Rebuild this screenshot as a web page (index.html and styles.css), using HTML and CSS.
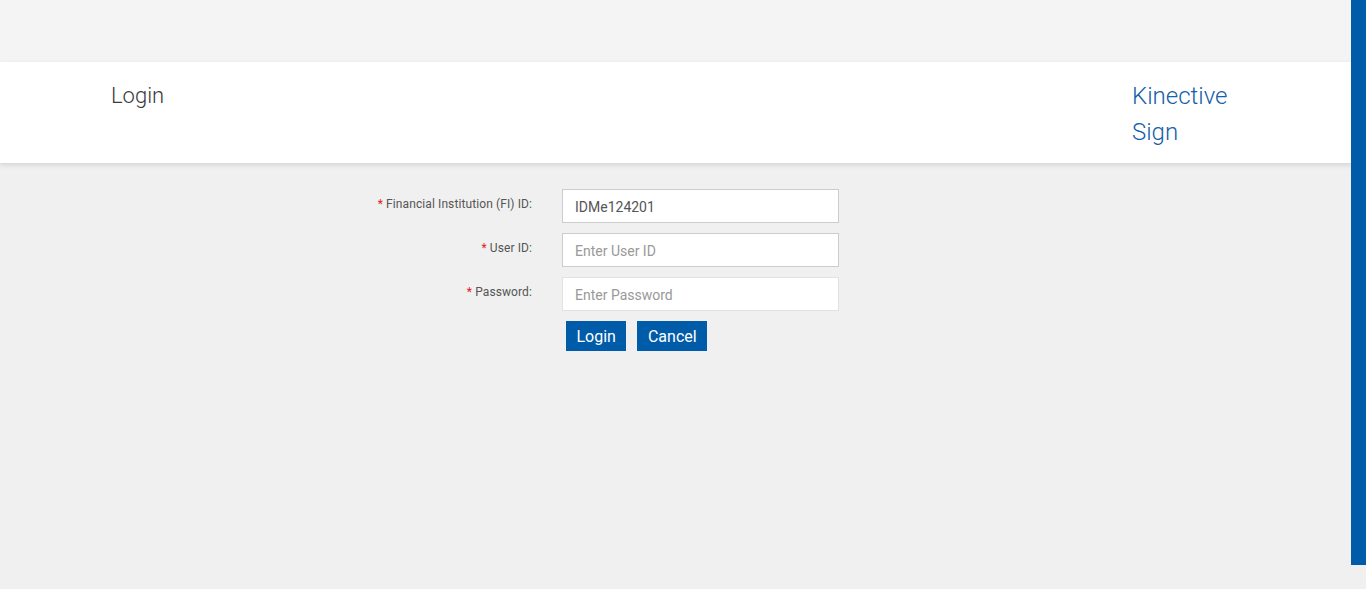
FILE: index.html
```html
<!DOCTYPE html>
<html lang="en">
<head>
  <meta charset="UTF-8" />
  <meta name="viewport" content="width=device-width, initial-scale=1.0"/>
  <title>Login - Kinective Sign</title>
  <link rel="stylesheet" href="styles.css">
</head>
<body>
  <div class="top-band"></div>

  <header>
    <h1 class="page-title">Login</h1>
    <div class="brand">Kinective Sign</div>
  </header>

  <form class="login-form" onsubmit="return false;">
    <div class="form-row">
      <label for="fiId"><span class="req">*</span> Financial Institution (FI) ID:</label>
      <input type="text" id="fiId" class="field" value="IDMe124201">
    </div>
    <div class="form-row">
      <label for="userId"><span class="req">*</span> User ID:</label>
      <input type="text" id="userId" class="field" placeholder="Enter User ID">
    </div>
    <div class="form-row">
      <label for="password"><span class="req">*</span> Password:</label>
      <input type="password" id="password" class="field field-light" placeholder="Enter Password">
    </div>
    <div class="form-row">
      <span></span>
      <div class="button-group">
        <button type="submit" class="btn">Login</button>
        <button type="button" class="btn">Cancel</button>
      </div>
    </div>
  </form>

  <div class="side-bar"></div>
</body>
</html>
```

FILE: styles.css
```css
* { box-sizing: border-box; }
body {
  margin: 0;
  padding: 0;
  font-family: Roboto, "Liberation Sans", Arial, sans-serif;
  background-color: #f0f0f0;
  color: #333;
  height: 589px;
  overflow: hidden;
}
.top-band {
  height: 62px;
  background: #f4f4f4;
}
header {
  background: #fff;
  height: 101px;
  padding: 16px 118px 0 111px;
  display: flex;
  justify-content: space-between;
  align-items: flex-start;
  box-shadow: 0 2px 5px rgba(0, 0, 0, 0.12);
  position: relative;
}
.page-title {
  margin: 0;
  font-size: 22px;
  font-weight: 300;
  line-height: 36px;
  color: #3a3a3a;
}
.brand {
  width: 116px;
  font-size: 24px;
  font-weight: 300;
  line-height: 36px;
  color: #1560a8;
}
.login-form {
  margin-top: 26px;
  display: flex;
  flex-direction: column;
  gap: 10px;
}
.form-row {
  display: grid;
  grid-template-columns: 532px 277px;
  column-gap: 30px;
  align-items: start;
}
.form-row label {
  text-align: right;
  font-size: 12px;
  letter-spacing: 0.1px;
  line-height: 17px;
  padding-top: 7px;
  color: #555;
}
.req {
  color: #e32020;
}
.field {
  height: 34px;
  width: 100%;
  padding: 2px 12px 0;
  border: 1px solid #ccc;
  background: #fff;
  font-family: inherit;
  font-size: 14px;
  color: #555;
  outline: none;
}
.field-light {
  border-color: #e2e2e2;
}
.field::placeholder {
  color: #999;
}
.button-group {
  display: flex;
  gap: 11px;
  padding-left: 4px;
}
.btn {
  height: 30px;
  padding: 0 10.5px;
  border: none;
  background-color: #005ca8;
  color: #fff;
  font-family: inherit;
  font-size: 16px;
  cursor: pointer;
}
.side-bar {
  position: fixed;
  top: 0;
  right: 0;
  width: 15px;
  height: 565px;
  background: #005ca8;
}
```
